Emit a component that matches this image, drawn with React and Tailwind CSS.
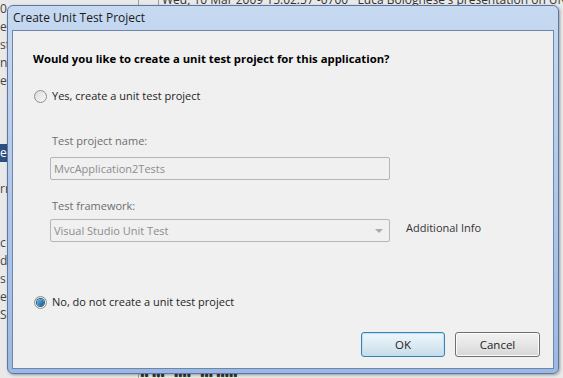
import React from "react";

const font = { fontFamily: '"Open Sans", "Noto Sans", sans-serif' };

function Radio({ checked }) {
  return (
    <span className="relative inline-flex h-[13px] w-[13px] shrink-0 items-center justify-center rounded-full border border-[#8e8f8f] bg-gradient-to-br from-[#dcdcdc] to-[#f8f8f8]">
      {checked && (
        <span className="h-[7px] w-[7px] rounded-full bg-gradient-to-br from-[#6fc3f2] to-[#0f4d80] shadow-[0_0_0_1px_#1f5f95]" />
      )}
    </span>
  );
}

export default function App() {
  return (
    <div className="relative h-[378px] w-[563px] overflow-hidden bg-[#e9e9e9] text-[#1e1e1e]" style={font}>
      {/* window behind the dialog */}
      <div className="absolute left-[138px] top-0 h-full w-px bg-[#a0a0a0]" />
      <div className="absolute left-[158px] top-0 h-full w-px bg-[#a0a0a0]" />
      <div className="absolute left-[162px] top-[-9px] whitespace-nowrap text-[12px] text-[#333]">
        Wed, 10 Mar 2009 15:02:57 -0700 &nbsp; Luca Bolognese's presentation on UNIT
      </div>
      <div className="absolute left-0 top-0 flex w-[7px] flex-col overflow-hidden text-[12px] leading-[18px] text-[#444]">
        <span>08</span><span>e</span><span>st</span><span>n</span><span>e</span><span>&nbsp;</span><span>&nbsp;</span><span>&nbsp;</span>
        <span className="bg-[#2d4f80] text-white">er</span><span>&nbsp;</span><span>rr</span><span>&nbsp;</span>
        <span>&nbsp;</span><span>c</span><span>d</span><span>s</span><span>e</span><span>S</span>
      </div>
      <div className="absolute bottom-[-6px] left-[140px] whitespace-nowrap text-[12px] font-bold text-[#333]">
        ▪▪ ▪▪▪ &nbsp; ▪▪▪▪ &nbsp; ▪▪▪ ▪▪▪▪▪
      </div>

      {/* dialog */}
      <div className="absolute left-[7px] top-[5px] flex h-[369px] w-[552px] flex-col rounded-[6px] border border-[#5a78a3] bg-gradient-to-b from-[#c6d9f1] via-[#b0c8ea] to-[#9cb9e3] shadow-[1px_1px_3px_rgba(0,0,0,0.35)]">
        <div className="flex h-[24px] items-center pl-[5px] text-[12px] text-[#1a1a1a]">
          Create Unit Test Project
        </div>
        <div className="mx-[4px] mb-[4px] flex flex-1 flex-col border border-[#6f86a8] bg-[#f0f0f0] text-[11px] leading-[16px]">
          <div className="ml-[20px] mt-[20px] text-[11.3px] font-bold text-black">
            Would you like to create a unit test project for this application?
          </div>
          <div className="ml-[21px] mt-[21px] flex h-[16px] items-center gap-[5px]">
            <Radio />
            <span>Yes, create a unit test project</span>
          </div>
          <div className="ml-[39px] mt-[29px] text-[#6d6d6d]">Test project name:</div>
          <div className="ml-[37px] mt-[8px] flex h-[23px] w-[340px] items-center rounded-[2px] border border-[#b5b5b5] bg-[#f0f0f0] px-[3px] text-[#8d8d8d]">
            MvcApplication2Tests
          </div>
          <div className="ml-[39px] mt-[18px] text-[#6d6d6d]">Test framework:</div>
          <div className="ml-[37px] mt-[5px] flex items-center gap-[16px]">
            <div className="flex h-[23px] w-[340px] items-center justify-between rounded-[2px] border border-[#b5b5b5] bg-[#f0f0f0] pl-[3px] pr-[6px] text-[#8d8d8d]">
              <span>Visual Studio Unit Test</span>
              <span className="h-0 w-0 border-x-[4px] border-t-[4px] border-x-transparent border-t-[#a9a9a9]" />
            </div>
            <span className="-mt-[6px] text-[#333]">Additional Info</span>
          </div>
          <div className="ml-[21px] mt-[52px] flex h-[16px] items-center gap-[5px]">
            <Radio checked />
            <span>No, do not create a unit test project</span>
          </div>
          <div className="mr-[13px] mt-[22px] flex justify-end gap-[10px]">
            <button className="h-[25px] w-[84px] rounded-[3px] border border-[#3c7fb1] bg-gradient-to-b from-[#eef6fb] via-[#dceaf3] to-[#c7dde9] text-[11.5px] text-[#1e1e1e] shadow-[inset_0_0_0_1px_#b8e3f6]">
              OK
            </button>
            <button className="h-[25px] w-[85px] rounded-[3px] border border-[#707070] bg-gradient-to-b from-[#f2f2f2] via-[#e6e6e6] to-[#d6d6d6] text-[11.5px] text-[#1e1e1e] shadow-[inset_0_0_0_1px_#fbfbfb]">
              Cancel
            </button>
          </div>
        </div>
      </div>
    </div>
  );
}
